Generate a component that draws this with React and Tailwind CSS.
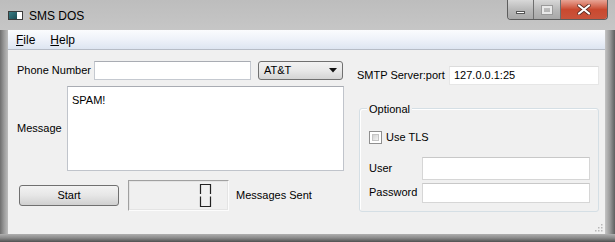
import React from 'react'

const font = { fontFamily: '"Liberation Sans", Arial, sans-serif' }

// Qt-style outlined 7-segment zero
const LcdZero = () => (
  <svg width="13" height="25" viewBox="0 0 13 25" className="block">
    <path d="M1.5 11 V1.5 H11.5 V11" fill="none" stroke="#222" strokeWidth="1.2" />
    <path d="M1.5 13.5 V23.5 H11.5 V13.5" fill="none" stroke="#222" strokeWidth="1.2" />
  </svg>
)

const WinButtons = () => (
  <div className="flex h-[20px] mr-[7px] rounded-b-[4px] overflow-hidden border border-t-0 border-[#5d5d5d]">
    <div className="w-[26px] h-full flex items-center justify-center bg-gradient-to-b from-[#d8d8d8] via-[#b9b9b9] to-[#a8a8a8] border-r border-[#6e6e6e]">
      <div className="w-[9px] h-[3px] bg-white border border-[#555] mt-[5px]" />
    </div>
    <div className="w-[27px] h-full flex items-center justify-center bg-gradient-to-b from-[#d8d8d8] via-[#b9b9b9] to-[#a8a8a8] border-r border-[#6e6e6e]">
      <div className="w-[10px] h-[8px] border-2 border-[#e9e9e9] outline outline-1 outline-[#9a9a9a]" />
    </div>
    <div className="w-[46px] h-full flex items-center justify-center bg-gradient-to-b from-[#e7a495] via-[#c9492f] to-[#c8533b]">
      <svg width="14" height="11" viewBox="0 0 14 11">
        <path d="M2 1.5 L12 9.5 M12 1.5 L2 9.5" stroke="#5b2a20" strokeWidth="3.6" strokeLinecap="round" />
        <path d="M2 1.5 L12 9.5 M12 1.5 L2 9.5" stroke="#fff" strokeWidth="2.2" strokeLinecap="round" />
      </svg>
    </div>
  </div>
)

const Input = ({ className = '', value = '' }) => (
  <div className={`shrink-0 bg-white border border-[#c5c9d0] border-t-[#a9acb3] flex items-center px-[4px] text-black whitespace-nowrap ${className}`}>
    {value}
  </div>
)

export default function App() {
  return (
    <div style={font} className="w-[615px] h-[242px] flex flex-col bg-gradient-to-r from-[#8e8e8e] via-[#b5b5b5] to-[#9d9d9d] text-black overflow-hidden">
      {/* title bar */}
      <div className="h-[30px] shrink-0 flex items-start bg-gradient-to-b from-[#bdbdbd] to-[#c6c6c6]">
        <div className="ml-[8px] mt-[11px] w-[15px] h-[9px] flex border border-[#3c3c3c] bg-white">
          <div className="w-[8px] h-full bg-gradient-to-br from-[#3a7e86] to-[#1d4d54]" />
        </div>
        <span className="ml-[6px] mt-[7px] text-[12px] text-black">SMS DOS</span>
        <div className="flex-1" />
        <WinButtons />
      </div>

      <div className="flex-1 flex">
        <div className="w-[8px] shrink-0 bg-gradient-to-r from-[#6f6f6f] via-[#9a9a9a] to-[#bcbcbc]" />
        <div className="w-[597px] shrink-0 flex flex-col bg-[#f0f0f0] relative">
          {/* menubar */}
          <div className="h-[20px] shrink-0 flex items-center gap-[15px] pl-[8px] text-[12px] bg-gradient-to-b from-[#fbfcfe] via-[#eef2f9] to-[#dde5f1] border-b border-[#b6bcc6]">
            <span><span className="underline">F</span>ile</span>
            <span><span className="underline">H</span>elp</span>
          </div>

          <div className="flex-1 flex text-[11px] whitespace-nowrap">
            {/* left column */}
            <div className="w-[341px] shrink-0 pl-[9px] flex flex-col">
              <div className="mt-[11px] h-[19px] flex items-center">
                <span className="w-[77px] shrink-0">Phone Number</span>
                <Input className="w-[157px] h-[19px] border-[#a7bfdb] border-t-[#8fa9c9]" />
                <div className="shrink-0 ml-[7px] w-[85px] h-[19px] rounded-[3px] border border-[#707070] bg-gradient-to-b from-[#f2f2f2] via-[#e8e8e8] to-[#d4d4d4] flex items-center justify-between px-[5px]">
                  <span>AT&amp;T</span>
                  <svg width="8" height="5" viewBox="0 0 8 5"><path d="M0 0 H8 L4 4.5 Z" fill="#111" /></svg>
                </div>
              </div>
              <div className="mt-[6px] flex items-center">
                <span className="w-[50px] shrink-0">Message</span>
                <div className="shrink-0 w-[277px] h-[85px] bg-white border border-[#c0c4cb] border-t-[#a9acb3] px-[4px] py-[8px] leading-none">SPAM!</div>
              </div>
              <div className="mt-[9px] h-[31px] flex items-center">
                <div className="shrink-0 ml-[2px] w-[100px] h-[21px] rounded-[3px] border border-[#707070] bg-gradient-to-b from-[#f3f3f3] via-[#e6e6e6] to-[#d0d0d0] flex items-center justify-center">Start</div>
                <div className="shrink-0 ml-[9px] w-[101px] h-[31px] border border-[#a0a0a0] border-r-[#fcfcfc] border-b-[#fcfcfc] outline outline-1 -outline-offset-2 outline-[#e4e4e4] flex items-center justify-end pr-[16px]">
                  <LcdZero />
                </div>
                <span className="ml-[7px]">Messages Sent</span>
              </div>
            </div>

            {/* right column */}
            <div className="flex-1 pl-[8px] flex flex-col">
              <div className="mt-[16px] h-[19px] flex items-center">
                <span className="w-[92px] shrink-0">SMTP Server:port</span>
                <Input className="w-[150px] h-[19px] border-[#e6e6e6] border-t-[#dcdcdc]" value="127.0.0.1:25" />
              </div>
              <div className="mt-[23px] ml-[2px] w-[240px] h-[104px] rounded-[3px] border border-[#d5dfe5] shadow-[inset_1px_1px_0_#ffffff] relative flex flex-col pl-[9px]">
                <span className="absolute -top-[8px] left-[7px] px-[2px] bg-[#f0f0f0]">Optional</span>
                <div className="mt-[20px] flex items-center">
                  <div className="w-[13px] h-[13px] border border-[#8f8f8f] bg-white p-[2px]">
                    <div className="w-full h-full bg-gradient-to-br from-[#d2d2d2] to-[#f4f4f4] border border-[#c4c4c4]" />
                  </div>
                  <span className="ml-[4px]">Use TLS</span>
                </div>
                <div className="mt-[11px] flex items-center">
                  <span className="w-[53px] shrink-0">User</span>
                  <Input className="w-[168px] h-[23px] border-[#d6d6d6] border-t-[#c8c8c8]" />
                </div>
                <div className="mt-[3px] flex items-center">
                  <span className="w-[53px] shrink-0">Password</span>
                  <Input className="w-[168px] h-[20px] border-[#d6d6d6] border-t-[#c8c8c8]" />
                </div>
              </div>
            </div>
          </div>

          {/* size grip */}
          <svg width="8" height="8" viewBox="0 0 8 8" className="absolute right-[2px] bottom-[2px]">
            <rect x="6" y="0" width="1.5" height="1.5" fill="#b8b8b8" />
            <rect x="3" y="3" width="1.5" height="1.5" fill="#b8b8b8" />
            <rect x="6" y="3" width="1.5" height="1.5" fill="#b8b8b8" />
            <rect x="0" y="6" width="1.5" height="1.5" fill="#b8b8b8" />
            <rect x="3" y="6" width="1.5" height="1.5" fill="#b8b8b8" />
            <rect x="6" y="6" width="1.5" height="1.5" fill="#b8b8b8" />
          </svg>
        </div>
        <div className="flex-1 bg-gradient-to-r from-[#c4c4c4] via-[#9a9a9a] to-[#5f5f5f]" />
      </div>
      <div className="h-[8px] shrink-0 bg-gradient-to-b from-[#b0b0b0] via-[#8a8a8a] to-[#505050]" />
    </div>
  )
}
